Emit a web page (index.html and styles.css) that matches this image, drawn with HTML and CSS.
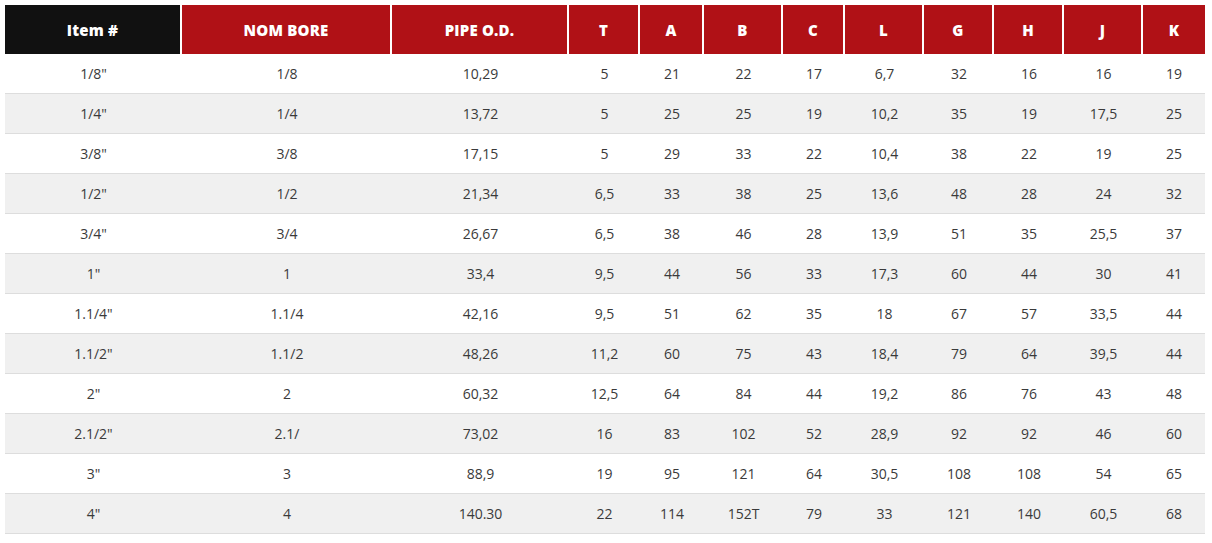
FILE: index.html
```html
<!DOCTYPE html>
<html lang="en">
<head>
<meta charset="utf-8">
<title>Pipe dimensions</title>
<link rel="stylesheet" href="styles.css">
</head>
<body>
<div class="wrap">
<table class="spec">
  <colgroup>
    <col class="w-item"><col class="w-bore"><col class="w-od">
    <col class="w-t"><col class="w-a"><col class="w-b"><col class="w-c">
    <col class="w-l"><col class="w-g"><col class="w-h"><col class="w-j"><col class="w-k">
  </colgroup>
  <thead>
    <tr>
      <th class="dark">Item #</th><th>NOM BORE</th><th>PIPE O.D.</th>
      <th>T</th><th>A</th><th>B</th><th>C</th><th>L</th><th>G</th><th>H</th><th>J</th><th class="last">K</th>
    </tr>
  </thead>
  <tbody>
    <tr><td>1/8"</td><td>1/8</td><td>10,29</td><td>5</td><td>21</td><td>22</td><td>17</td><td>6,7</td><td>32</td><td>16</td><td>16</td><td>19</td></tr>
    <tr><td>1/4"</td><td>1/4</td><td>13,72</td><td>5</td><td>25</td><td>25</td><td>19</td><td>10,2</td><td>35</td><td>19</td><td>17,5</td><td>25</td></tr>
    <tr><td>3/8"</td><td>3/8</td><td>17,15</td><td>5</td><td>29</td><td>33</td><td>22</td><td>10,4</td><td>38</td><td>22</td><td>19</td><td>25</td></tr>
    <tr><td>1/2"</td><td>1/2</td><td>21,34</td><td>6,5</td><td>33</td><td>38</td><td>25</td><td>13,6</td><td>48</td><td>28</td><td>24</td><td>32</td></tr>
    <tr><td>3/4"</td><td>3/4</td><td>26,67</td><td>6,5</td><td>38</td><td>46</td><td>28</td><td>13,9</td><td>51</td><td>35</td><td>25,5</td><td>37</td></tr>
    <tr><td>1"</td><td>1</td><td>33,4</td><td>9,5</td><td>44</td><td>56</td><td>33</td><td>17,3</td><td>60</td><td>44</td><td>30</td><td>41</td></tr>
    <tr><td>1.1/4"</td><td>1.1/4</td><td>42,16</td><td>9,5</td><td>51</td><td>62</td><td>35</td><td>18</td><td>67</td><td>57</td><td>33,5</td><td>44</td></tr>
    <tr><td>1.1/2"</td><td>1.1/2</td><td>48,26</td><td>11,2</td><td>60</td><td>75</td><td>43</td><td>18,4</td><td>79</td><td>64</td><td>39,5</td><td>44</td></tr>
    <tr><td>2"</td><td>2</td><td>60,32</td><td>12,5</td><td>64</td><td>84</td><td>44</td><td>19,2</td><td>86</td><td>76</td><td>43</td><td>48</td></tr>
    <tr><td>2.1/2"</td><td>2.1/</td><td>73,02</td><td>16</td><td>83</td><td>102</td><td>52</td><td>28,9</td><td>92</td><td>92</td><td>46</td><td>60</td></tr>
    <tr><td>3"</td><td>3</td><td>88,9</td><td>19</td><td>95</td><td>121</td><td>64</td><td>30,5</td><td>108</td><td>108</td><td>54</td><td>65</td></tr>
    <tr><td>4"</td><td>4</td><td>140.30</td><td>22</td><td>114</td><td>152T</td><td>79</td><td>33</td><td>121</td><td>140</td><td>60,5</td><td>68</td></tr>
  </tbody>
</table>
</div>
</body>
</html>
```
FILE: styles.css
```css
html, body {
  margin: 0;
  padding: 0;
  background: #ffffff;
}

.wrap {
  padding: 5px 0 0 5px;
}

.spec {
  width: 1200px;
  table-layout: fixed;
  border-collapse: separate;
  border-spacing: 0;
  font-family: "Open Sans", "Liberation Sans", sans-serif;
}

.w-item { width: 177px; }
.w-bore { width: 210px; }
.w-od { width: 177px; }
.w-t { width: 71px; }
.w-a { width: 64px; }
.w-b { width: 79px; }
.w-c { width: 62px; }
.w-l { width: 79px; }
.w-g { width: 70px; }
.w-h { width: 70px; }
.w-j { width: 79px; }
.w-k { width: 62px; }

.spec th {
  height: 49px;
  padding: 0;
  background: #b01116;
  color: #ffffff;
  font-size: 15px;
  font-weight: 800;
  letter-spacing: 0.2px;
  text-align: center;
  vertical-align: middle;
  border-right: 2px solid #ffffff;
  box-sizing: border-box;
}

.spec th.dark {
  background: #111111;
}

.spec th.last {
  border-right: 0;
}

.spec td {
  height: 40px;
  padding: 0;
  box-sizing: border-box;
  border-bottom: 1px solid #dddddd;
  color: #3a3a3a;
  font-size: 14px;
  font-weight: 400;
  text-align: center;
  vertical-align: middle;
}

.spec tbody tr:nth-child(even) td {
  background: #f0f0f0;
}
```
